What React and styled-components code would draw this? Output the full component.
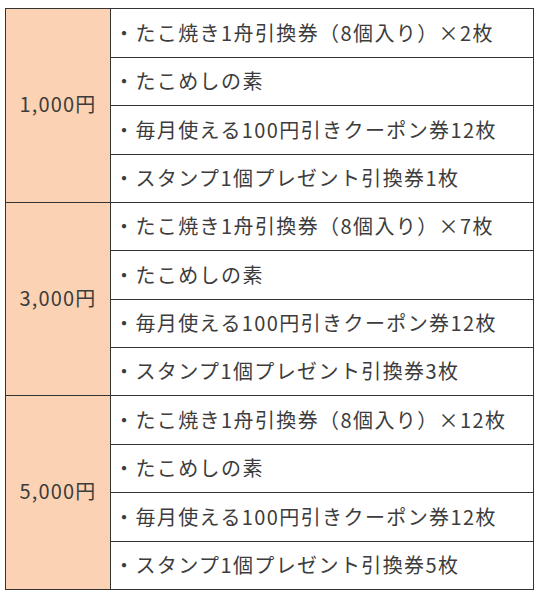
import React from "react";
import styled, { createGlobalStyle } from "styled-components";

const Global = createGlobalStyle`
  html, body { margin: 0; padding: 0; background: #ffffff; }
  body { font-family: "Noto Sans CJK JP", "Noto Sans", sans-serif; }
`;

const Page = styled.div`
  padding: 8px 0 0 5px;
`;

const Table = styled.table`
  border-collapse: collapse;
  table-layout: fixed;
  width: 529px;
  border: 1px solid #333333;
`;

const PriceCell = styled.td`
  width: 104px;
  background: #fbd2b3;
  border: 1px solid #333333;
  text-align: center;
  vertical-align: middle;
  font-size: 20px;
  letter-spacing: 1.2px;
  color: #3c3c3c;
  padding: 0 0 4px 0;
`;

const ItemCell = styled.td`
  height: ${(p) => p.$h}px;
  box-sizing: border-box;
  border: 1px solid #333333;
  padding: 0 0 2px 3px;
  font-size: 20px;
  letter-spacing: 1.4px;
  color: #3c3c3c;
  white-space: nowrap;
  vertical-align: middle;
  background: #ffffff;
`;

const groups = [
  {
    price: "1,000円",
    items: [
      "・たこ焼き1舟引換券（8個入り）×2枚",
      "・たこめしの素",
      "・毎月使える100円引きクーポン券12枚",
      "・スタンプ1個プレゼント引換券1枚",
    ],
    heights: [49, 48, 49, 48],
  },
  {
    price: "3,000円",
    items: [
      "・たこ焼き1舟引換券（8個入り）×7枚",
      "・たこめしの素",
      "・毎月使える100円引きクーポン券12枚",
      "・スタンプ1個プレゼント引換券3枚",
    ],
    heights: [48, 49, 48, 48],
  },
  {
    price: "5,000円",
    items: [
      "・たこ焼き1舟引換券（8個入り）×12枚",
      "・たこめしの素",
      "・毎月使える100円引きクーポン券12枚",
      "・スタンプ1個プレゼント引換券5枚",
    ],
    heights: [49, 48, 49, 48],
  },
];

export default function App() {
  return (
    <Page>
      <Global />
      <Table>
        <colgroup>
          <col style={{ width: 105 }} />
          <col />
        </colgroup>
        <tbody>
          {groups.map((g) =>
            g.items.map((item, i) => (
              <tr key={g.price + i}>
                {i === 0 && <PriceCell rowSpan={4}>{g.price}</PriceCell>}
                <ItemCell $h={g.heights[i]}>{item}</ItemCell>
              </tr>
            ))
          )}
        </tbody>
      </Table>
    </Page>
  );
}
